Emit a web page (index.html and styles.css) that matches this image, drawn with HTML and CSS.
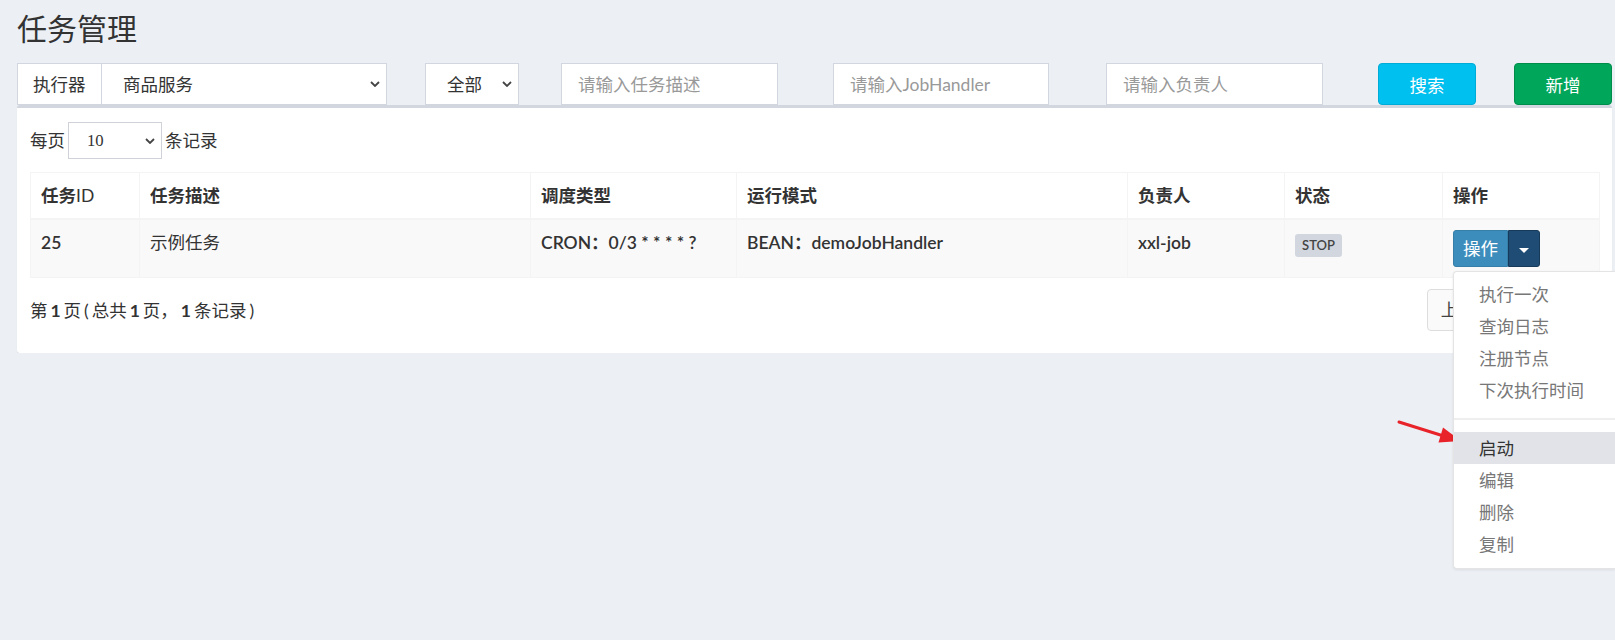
FILE: index.html
```html
<!DOCTYPE html>
<html lang="zh-CN">
<head>
    <meta charset="UTF-8">
    <title>任务管理</title>
    <link rel="stylesheet" href="styles.css">
</head>
<body>

<div class="page">
    <h1 class="page-title">任务管理</h1>

    <!-- 搜索条件 -->
    <div class="filters">
        <div class="input-group">
            <span class="control addon">执行器</span>
            <div class="control select select-group">
                <span>商品服务</span>
                <svg class="chevron" width="10" height="6" viewBox="0 0 10 6"><path d="M1 1l4 4 4-4" fill="none" stroke="#444" stroke-width="1.8"/></svg>
            </div>
        </div>
        <div class="control select select-status">
            <span>全部</span>
            <svg class="chevron" width="10" height="6" viewBox="0 0 10 6"><path d="M1 1l4 4 4-4" fill="none" stroke="#444" stroke-width="1.8"/></svg>
        </div>
        <input class="control input input-desc" type="text" placeholder="请输入任务描述">
        <input class="control input input-handler" type="text" placeholder="请输入JobHandler">
        <input class="control input input-owner" type="text" placeholder="请输入负责人">
        <button class="btn btn-search">搜索</button>
        <button class="btn btn-add">新增</button>
    </div>

    <!-- 任务列表 -->
    <div class="box">
        <div class="length-row">
            <span>每页</span>
            <div class="select select-length">
                <span>10</span>
                <svg class="chevron" width="10" height="6" viewBox="0 0 10 6"><path d="M1 1l4 4 4-4" fill="none" stroke="#444" stroke-width="1.8"/></svg>
            </div>
            <span>条记录</span>
        </div>

        <table class="job-table">
            <thead>
                <tr>
                    <th class="col-id">任务<span class="light">ID</span></th>
                    <th class="col-desc">任务描述</th>
                    <th class="col-type">调度类型</th>
                    <th class="col-mode">运行模式</th>
                    <th class="col-owner">负责人</th>
                    <th class="col-status">状态</th>
                    <th class="col-op">操作</th>
                </tr>
            </thead>
            <tbody>
                <tr>
                    <td class="strong">25</td>
                    <td>示例任务</td>
                    <td class="strong">CRON：0/3 * * * * ?</td>
                    <td class="strong">BEAN：demoJobHandler</td>
                    <td class="strong">xxl-job</td>
                    <td><span class="label">STOP</span></td>
                    <td>
                        <div class="btn-group">
                            <button class="btn-op">操作</button>
                            <button class="btn-toggle"><span class="caret"></span></button>
                        </div>
                    </td>
                </tr>
            </tbody>
        </table>

        <div class="table-footer">
            <div class="info">第 <b>1</b> 页 ( 总共 <b>1</b> 页， <b>1</b> 条记录 )</div>
            <ul class="pagination">
                <li>上页</li>
                <li class="current">1</li>
                <li>下页</li>
            </ul>
        </div>
    </div>
</div>

<!-- 操作下拉菜单（展开状态） -->
<ul class="dropdown-menu">
    <li>执行一次</li>
    <li>查询日志</li>
    <li>注册节点</li>
    <li>下次执行时间</li>
    <li class="divider"></li>
    <li class="active">启动</li>
    <li>编辑</li>
    <li>删除</li>
    <li>复制</li>
</ul>

<!-- 标注箭头 -->
<svg class="arrow" width="80" height="40" viewBox="1390 412 80 40">
    <line x1="1399" y1="422" x2="1442" y2="435.5" stroke="#e8232a" stroke-width="3" stroke-linecap="round"/>
    <polygon points="1461,441 1443,427.5 1438.5,442.5" fill="#e8232a"/>
</svg>

</body>
</html>
```

FILE: styles.css
```css
* {
    box-sizing: border-box;
}
body {
    margin: 0;
    background: #ecf0f5;
    color: #333;
    font-family: Lato, "Noto Sans CJK SC", sans-serif;
    font-size: 17.5px;
    line-height: 25px;
}
.page {
    padding: 11px 3px 0 17px;
}
.page-title {
    margin: 0;
    height: 33px;
    font-family: "Noto Sans CJK SC", sans-serif;
    font-size: 30px;
    font-weight: normal;
    line-height: 33px;
    color: #333;
}

/* filters */
.filters {
    display: flex;
    margin-top: 19px;
    height: 42px;
}
.control {
    height: 42px;
    border: 1px solid #d2d6de;
    background: #fff;
    display: flex;
    align-items: center;
    font-family: Lato, "Noto Sans CJK SC", sans-serif;
    font-size: 17.5px;
    color: #333;
}
.input-group {
    display: flex;
    width: 370px;
}
.addon {
    width: 84px;
    padding: 0 15px;
    border-right: 0;
}
.select {
    display: flex;
    align-items: center;
    justify-content: space-between;
}
.chevron {
    flex: none;
}
.select-group {
    width: 286px;
    padding: 0 6px 0 21px;
}
.select-status {
    width: 94px;
    margin-left: 38px;
    padding: 0 6px 0 21px;
}
.input {
    padding: 0 16px;
    outline: none;
}
.input::placeholder {
    color: #999;
}
.input-desc {
    width: 217px;
    margin-left: 42px;
}
.input-handler {
    width: 216px;
    margin-left: 55px;
}
.input-owner {
    width: 217px;
    margin-left: 57px;
}
.btn {
    width: 98px;
    height: 42px;
    border: 1px solid;
    border-radius: 4px;
    color: #fff;
    font-family: Lato, "Noto Sans CJK SC", sans-serif;
    font-size: 17.5px;
    padding: 0;
}
.btn-search {
    margin-left: 55px;
    background: #00c0ef;
    border-color: #00acd6;
}
.btn-add {
    margin-left: 38px;
    background: #00a65a;
    border-color: #008d4c;
}

/* box */
.box {
    background: #fff;
    border-top: 3px solid #d2d6de;
    border-radius: 3px;
    box-shadow: 0 1px 1px rgba(0, 0, 0, 0.1);
    padding: 14px 13px 22px;
}
.length-row {
    display: flex;
    align-items: center;
    gap: 3px;
    height: 37px;
}
.select-length {
    width: 94px;
    height: 37px;
    border: 1px solid #cfd2d8;
    padding: 0 6px 0 18px;
    font-family: "Liberation Serif", serif;
    font-size: 16.7px;
}

/* table */
.job-table {
    width: 100%;
    margin-top: 13px;
    border-collapse: collapse;
    table-layout: fixed;
}
.job-table th,
.job-table td {
    border: 1px solid #f4f4f4;
    padding: 10px;
    text-align: left;
    vertical-align: top;
}
.job-table th {
    font-weight: bold;
    border-bottom-width: 2px;
}
.job-table th .light {
    font-weight: normal;
}
.job-table tbody tr {
    background: #f9f9f9;
}
.job-table td.strong {
    font-weight: 600;
}
.col-id { width: 109px; }
.col-desc { width: 391px; }
.col-type { width: 206px; }
.col-mode { width: 391px; }
.col-owner { width: 157px; }
.col-status { width: 158px; }
.col-op { width: 157px; }

.label {
    display: inline-block;
    margin-top: 4px;
    width: 47px;
    height: 23px;
    line-height: 23px;
    text-align: center;
    background: #d2d6de;
    color: #444;
    border-radius: 3px;
    font-size: 13px;
    font-weight: 600;
}

.btn-group {
    display: inline-flex;
    vertical-align: top;
}
.btn-op,
.btn-toggle {
    height: 37px;
    border: 1px solid;
    color: #fff;
    font-family: Lato, "Noto Sans CJK SC", sans-serif;
    font-size: 17.5px;
    line-height: 25px;
}
.btn-op {
    width: 55px;
    padding: 0;
    background: #3c8dbc;
    border-color: #367fa9;
    border-radius: 3px 0 0 3px;
}
.btn-toggle {
    width: 32px;
    padding: 0;
    background: #1f4c74;
    border-color: #163a5a;
    border-radius: 0 3px 3px 0;
}
.caret {
    display: inline-block;
    border-top: 5px solid #fff;
    border-left: 5px solid transparent;
    border-right: 5px solid transparent;
    vertical-align: middle;
}

/* opened menu, anchored under the 操作 button */
.dropdown-menu {
    position: absolute;
    top: 271px;
    left: 1453px;
    width: 162px;
    margin: 0;
    padding: 6px 0 8px;
    list-style: none;
    background: #fff;
    border: 1px solid #e4e4e4;
    border-right: 0;
    border-radius: 4px 0 0 4px;
    box-shadow: 0 1px 3px rgba(0, 0, 0, 0.08);
    z-index: 10;
}
.dropdown-menu li {
    padding: 3.5px 25px;
    color: #777;
    white-space: nowrap;
}
.dropdown-menu li.active {
    background: #e1e3e9;
    color: #333;
}
.dropdown-menu .divider {
    height: 2px;
    padding: 0;
    margin: 12px 0;
    background: #eeeeee;
}

/* footer */
.table-footer {
    display: flex;
    justify-content: space-between;
    align-items: center;
    margin-top: 11px;
}
.info {
    word-spacing: -1.5px;
}
.pagination {
    display: flex;
    margin: 0;
    padding: 0;
    list-style: none;
}
.pagination li {
    height: 42px;
    padding: 7px 15px;
    border: 1px solid #ddd;
    margin-left: -1px;
    color: #444;
    background: #fafafa;
}
.pagination li:first-child {
    padding-left: 13px;
    border-radius: 4px 0 0 4px;
}
.pagination li:last-child {
    border-radius: 0 4px 4px 0;
}
.pagination li.current {
    background: #3c8dbc;
    border-color: #367fa9;
    color: #fff;
}

.arrow {
    position: absolute;
    left: 1390px;
    top: 412px;
}
```
